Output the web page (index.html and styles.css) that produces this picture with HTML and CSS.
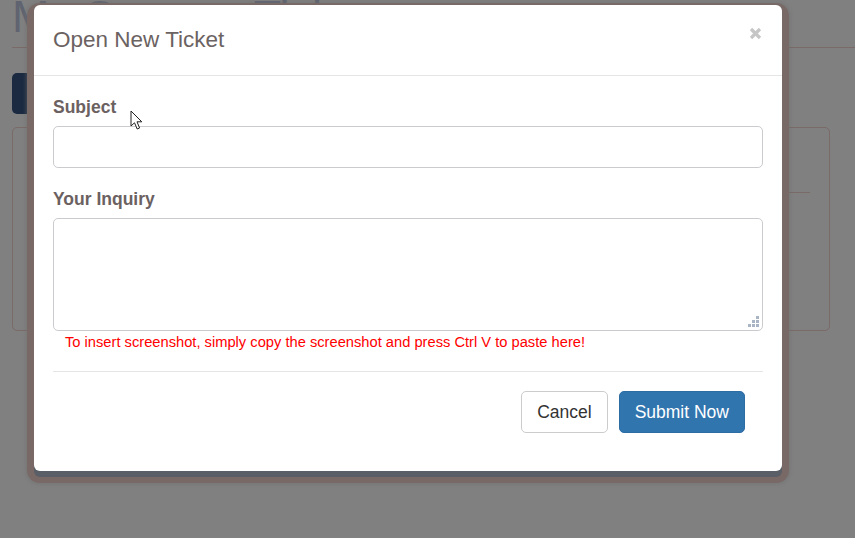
FILE: index.html
```html
<!DOCTYPE html>
<html lang="en">
<head>
<meta charset="utf-8">
<title>Open New Ticket</title>
<link rel="stylesheet" href="styles.css">
</head>
<body>
<div class="page">
  <h1 class="page-title">My Support Tickets</h1>
  <button class="btn-create" type="button">Create New Ticket</button>
  <div class="panel">
    <div class="panel-table"></div>
    <p class="panel-line">1</p>
    <p class="panel-line">2</p>
  </div>
</div>

<div class="modal">
  <div class="modal-header">
    <h4 class="modal-title">Open New Ticket</h4>
    <button class="close" type="button" aria-label="Close">
      <svg width="13" height="13" viewBox="0 0 13 13"><path d="M2 2 L11 11 M11 2 L2 11" stroke="#c6c6c6" stroke-width="3.2" stroke-linecap="butt"/></svg>
    </button>
  </div>
  <form class="modal-body">
    <div class="form-group">
      <label class="label" for="subject">Subject</label>
      <input class="input" id="subject" type="text">
    </div>
    <div class="form-group last">
      <label class="label" for="inquiry">Your Inquiry</label>
      <div class="textarea-wrap">
        <textarea class="input textarea" id="inquiry"></textarea>
        <svg class="grip" width="11" height="11" viewBox="0 0 11 11"><g fill="#a9b5c4"><rect x="8" y="0" width="3" height="3"/><rect x="4" y="4" width="3" height="3"/><rect x="8" y="4" width="3" height="3"/><rect x="0" y="8" width="3" height="3"/><rect x="4" y="8" width="3" height="3"/><rect x="8" y="8" width="3" height="3"/></g></svg>
      </div>
      <span class="help">To insert screenshot, simply copy the screenshot and press Ctrl V to paste here!</span>
    </div>
    <div class="modal-footer">
      <button class="btn btn-default" type="button">Cancel</button>
      <button class="btn btn-primary" type="button">Submit Now</button>
    </div>
  </form>
</div>

<svg class="cursor" width="14" height="21" viewBox="0 0 14 21"><path d="M1 1 L1 16 L4.5 12.8 L7.2 19 L9.6 18 L7 11.8 L11.8 11.8 Z" fill="#ffffff" stroke="#222222" stroke-width="1" stroke-linejoin="miter"/></svg>
</body>
</html>
```

FILE: styles.css
```css
* { box-sizing: border-box; }

html, body {
  margin: 0;
  padding: 0;
  background: #808080;
  font-family: "Liberation Sans", Arial, sans-serif;
  overflow: hidden;
}

body { width: 855px; height: 538px; position: relative; }

.page {
  padding-left: 12px;
}

.page-title {
  margin: -8px 0 0 0;
  font-size: 45px;
  line-height: 50px;
  font-weight: 500;
  color: #5f6470;
  padding-bottom: 5px;
  border-bottom: 1px solid #7a6a68;
  white-space: nowrap;
}

.btn-create {
  display: block;
  margin-top: 25px;
  height: 41px;
  padding: 0 16px;
  border: 0;
  border-radius: 5px;
  background: #1b2a40;
  color: #8a7470;
  font-family: inherit;
  font-size: 17.5px;
}

.panel {
  margin: 13px 25px 0 0;
  height: 204px;
  border: 1px solid #7a6a68;
  border-radius: 5px;
  padding: 64px 19px 0 19px;
}

.panel-table {
  height: 48px;
  border-top: 1px solid #7a6a68;
  border-left: 1px solid #5f6470;
}

.panel-line {
  margin: 24px 0 0 1px;
  font-size: 12px;
  line-height: 2px;
  color: #3c3c3c;
}

.modal {
  position: absolute;
  left: 34px;
  top: 5px;
  width: 748px;
  background: #ffffff;
  border-radius: 6px;
  box-shadow:
    0 6px 0 0 #5a5e66,
    0 5px 0 7px #786866,
    0 5px 3px 9px rgba(110, 110, 110, 0.35);
}

.modal-header {
  display: flex;
  justify-content: space-between;
  align-items: flex-start;
  padding: 19px 20px 19px 19px;
  border-bottom: 1px solid #e5e5e5;
}

.modal-title {
  margin: 0;
  font-size: 22.5px;
  line-height: 32px;
  font-weight: normal;
  color: #6b6262;
}

.close {
  margin-top: 3px;
  padding: 0;
  border: 0;
  background: transparent;
  line-height: 0;
}

.modal-body {
  margin: 0;
  padding: 19px 19px 19px 19px;
}

.form-group { margin-bottom: 19px; }
.form-group.last { margin-bottom: 0; }

.label {
  display: block;
  margin-bottom: 6px;
  font-size: 17.5px;
  line-height: 25px;
  font-weight: bold;
  color: #6b6161;
}

.input {
  display: block;
  width: 100%;
  height: 42px;
  margin: 0;
  border: 1px solid #cbcbcf;
  border-radius: 5px;
  background: #fff;
  font-family: inherit;
  font-size: 17.5px;
}

.textarea-wrap { position: relative; }

.textarea {
  height: 113px;
  resize: none;
}

.grip {
  position: absolute;
  right: 4px;
  bottom: 4px;
}

.help {
  display: block;
  margin-top: 1px;
  padding-left: 12px;
  font-size: 14.7px;
  line-height: 20px;
  color: #ff0000;
}

.modal-footer {
  margin-top: 19px;
  border-top: 1px solid #e5e5e5;
  padding: 19px 18px 19px 0;
  display: flex;
  justify-content: flex-end;
  gap: 11px;
}

.btn {
  height: 42px;
  padding: 0 15px;
  border-radius: 5px;
  font-family: inherit;
  font-size: 17.5px;
  cursor: pointer;
}

.btn-default {
  background: #fff;
  border: 1px solid #cccccc;
  color: #333333;
}

.btn-primary {
  background: #3175af;
  border: 1px solid #2e6da4;
  color: #ffffff;
}

.cursor {
  position: absolute;
  left: 130px;
  top: 110px;
}
```
